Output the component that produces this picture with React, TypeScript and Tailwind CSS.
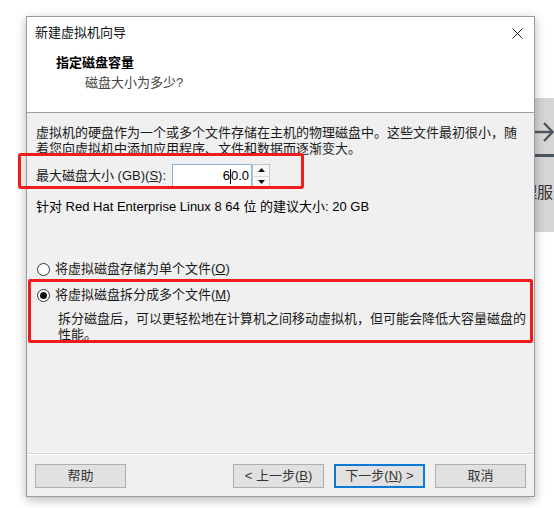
import React from "react";

const font = "font-['Liberation_Sans','Noto_Sans_CJK_SC',sans-serif]";

function Radio({ checked }: { checked?: boolean }) {
  return (
    <span className="w-[13px] h-[13px] rounded-full border border-[#333333] bg-white flex items-center justify-center flex-shrink-0">
      {checked && <span className="w-[7px] h-[7px] rounded-full bg-[#111111]" />}
    </span>
  );
}

function Btn({ children, primary }: { children: React.ReactNode; primary?: boolean }) {
  return (
    <button
      className={`w-[91px] h-[24px] flex items-center justify-center bg-[#e1e1e1] text-[13px] text-[#333333] ${
        primary ? "border-2 border-[#0a7ad6]" : "border border-[#adadad]"
      }`}
    >
      {children}
    </button>
  );
}

export default function App() {
  return (
    <div className={`relative w-[554px] h-[508px] bg-white overflow-hidden pt-[16px] pl-[26px] ${font}`}>
      {/* window behind the dialog */}
      <div className="absolute left-[510px] top-[98px] w-[44px] h-[134px] bg-[#d6d6d6] overflow-hidden">
        <svg className="absolute left-[24px] top-[23px]" width="20" height="22" viewBox="0 0 20 22" fill="none" stroke="#4b5560" strokeWidth="2.4">
          <path d="M0 11H18" />
          <path d="M10 2L18.5 11L10 20" />
        </svg>
        <div className="absolute left-[24px] top-[56px] w-[20px] h-[3px] bg-[#4b5560]" />
        <div className="absolute left-[-5px] top-[86px] whitespace-nowrap text-[16px] leading-[18px] text-[#333333]">管理服务</div>
      </div>

      {/* dialog */}
      <div className="relative z-10 w-[509px] h-[481px] border border-[#9b9b9b] bg-white flex flex-col shadow-[0_3px_10px_rgba(0,0,0,0.28)]">
        {/* title bar */}
        <div className="h-[32px] flex items-center justify-between pl-[8px] pr-[11px] flex-shrink-0">
          <span className="text-[13px] leading-[16px] text-[#111111]">新建虚拟机向导</span>
          <svg width="11" height="11" viewBox="0 0 11 11" fill="none" stroke="#222222" strokeWidth="1">
            <path d="M0.5 0.5L10.5 10.5M10.5 0.5L0.5 10.5" />
          </svg>
        </div>

        {/* header */}
        <div className="h-[64px] border-b border-[#a0a0a0] pl-[29px] pt-[6px] flex-shrink-0">
          <div className="text-[13px] leading-[16px] font-bold text-[#000000]">指定磁盘容量</div>
          <div className="mt-[4px] pl-[29px] text-[13px] leading-[16px] text-[#444444]">磁盘大小为多少?</div>
        </div>

        {/* body */}
        <div className="flex-1 bg-[#f0f0f0] pl-[9px] pt-[12px] text-[13px] leading-[16px] text-[#1a1a1a]">
          <p>
            虚拟机的硬盘作为一个或多个文件存储在主机的物理磁盘中。这些文件最初很小，随
            <br />
            着您向虚拟机中添加应用程序、文件和数据而逐渐变大。
          </p>

          <div className="mt-[7px] flex items-center h-[24px]">
            <span className="w-[136px] whitespace-nowrap">
              最大磁盘大小 (GB)(<span className="underline">S</span>):
            </span>
            <div className="w-[80px] h-[24px] bg-white border border-[#86b3e0] flex items-center justify-end pr-[2px] text-[13px] text-black">
              6<span className="w-px h-[15px] bg-black" />0.0
            </div>
            <div className="w-[18px] h-[24px] flex flex-col border border-[#c4c4c4] bg-[#f7f7f7]">
              <div className="flex-1 flex items-center justify-center border-b border-[#dcdcdc]">
                <svg width="7" height="4" viewBox="0 0 7 4"><path d="M0 4L3.5 0L7 4Z" fill="#111111" /></svg>
              </div>
              <div className="flex-1 flex items-center justify-center">
                <svg width="7" height="4" viewBox="0 0 7 4"><path d="M0 0L3.5 4L7 0Z" fill="#111111" /></svg>
              </div>
            </div>
          </div>

          <p className="mt-[11px] text-black">针对 Red Hat Enterprise Linux 8 64 位 的建议大小: 20 GB</p>

          <div className="mt-[46px] ml-[1px] flex items-center gap-[5px] h-[16px]">
            <Radio />
            <span>
              将虚拟磁盘存储为单个文件(<span className="underline">O</span>)
            </span>
          </div>

          <div className="mt-[10px] ml-[1px] flex items-center gap-[5px] h-[16px]">
            <Radio checked />
            <span>
              将虚拟磁盘拆分成多个文件(<span className="underline">M</span>)
            </span>
          </div>

          <p className="mt-[8px] pl-[22px]">
            拆分磁盘后，可以更轻松地在计算机之间移动虚拟机，但可能会降低大容量磁盘的
            <br />
            性能。
          </p>
        </div>

        {/* footer */}
        <div className="h-[43px] flex-shrink-0 bg-[#f0f0f0] border-t border-[#d5d5d5] shadow-[inset_0_1px_0_#ffffff] pt-[10px] pl-[8px] pr-[8px] flex items-start justify-between">
          <Btn>帮助</Btn>
          <div className="flex gap-[10px]">
            <Btn>&lt; 上一步(<span className="underline">B</span>)</Btn>
            <Btn primary>下一步(<span className="underline">N</span>) &gt;</Btn>
            <Btn>取消</Btn>
          </div>
        </div>
      </div>

      {/* annotation boxes */}
      <div className="absolute z-20 left-[18px] top-[153px] w-[286px] h-[36px] border-[3px] border-[#ee1c1c] rounded-[3px]" />
      <div className="absolute z-20 left-[28px] top-[279px] w-[505px] h-[64px] border-[3px] border-[#ee1c1c] rounded-[2px]" />
    </div>
  );
}
